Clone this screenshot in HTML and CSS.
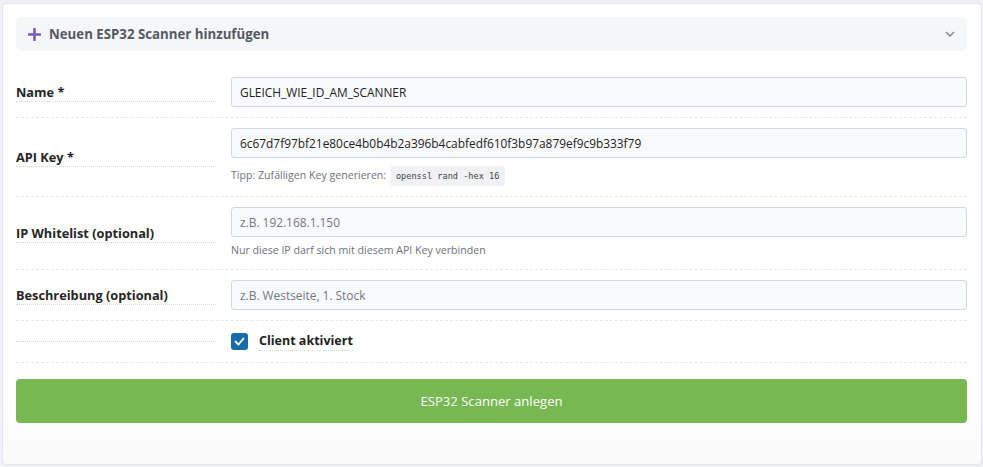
FILE: index.html
```html
<!DOCTYPE html>
<html lang="de">
<head>
<meta charset="utf-8">
<title>ESP32 Scanner</title>
<link rel="stylesheet" href="styles.css">
</head>
<body>
<div class="page">
  <div class="card">
    <div class="accordion">
      <div class="acc-title">
        <svg class="plus" width="13" height="13" viewBox="0 0 13 13"><path d="M6.5 1v11M1 6.5h11" stroke="#7b58c8" stroke-width="2.6" stroke-linecap="round"/></svg>
        <span>Neuen ESP32 Scanner hinzufügen</span>
      </div>
      <svg class="chev" width="10" height="6" viewBox="0 0 10 6"><path d="M1 1l4 4 4-4" fill="none" stroke="#7d8190" stroke-width="1.4"/></svg>
    </div>

    <form class="form">
      <div class="row">
        <label class="lbl">Name *</label>
        <div class="field">
          <input class="inp" type="text" value="GLEICH_WIE_ID_AM_SCANNER">
        </div>
      </div>
      <div class="row">
        <label class="lbl">API Key *</label>
        <div class="field">
          <input class="inp" type="text" value="6c67d7f97bf21e80ce4b0b4b2a396b4cabfedf610f3b97a879ef9c9b333f79">
          <div class="help">Tipp: Zufälligen Key generieren: <code class="code">openssl rand -hex 16</code></div>
        </div>
      </div>
      <div class="row">
        <label class="lbl">IP Whitelist (optional)</label>
        <div class="field">
          <input class="inp" type="text" placeholder="z.B. 192.168.1.150">
          <div class="help help-plain">Nur diese IP darf sich mit diesem API Key verbinden</div>
        </div>
      </div>
      <div class="row">
        <label class="lbl">Beschreibung (optional)</label>
        <div class="field">
          <input class="inp" type="text" placeholder="z.B. Westseite, 1. Stock">
        </div>
      </div>
      <div class="row">
        <label class="lbl lbl-empty"></label>
        <div class="field">
          <label class="check">
            <span class="box"><svg width="11" height="9" viewBox="0 0 11 9"><path d="M1.5 4.5l3 3 5-6" fill="none" stroke="#fff" stroke-width="1.8" stroke-linecap="round" stroke-linejoin="round"/></svg></span>
            <span class="check-text">Client aktiviert</span>
          </label>
        </div>
      </div>
      <button class="btn" type="button">ESP32 Scanner anlegen</button>
    </form>
  </div>
</div>
</body>
</html>
```

FILE: styles.css
```css
* { box-sizing: border-box; }
html, body { margin: 0; padding: 0; }
body {
  background: #f1f2f5;
  font-family: "Open Sans", "Noto Sans", Arial, sans-serif;
  color: #222;
}
.page {
  padding: 3px 1px 2px 2px;
}
.card {
  background: linear-gradient(#ffffff 85%, #fafafb);
  border: 1px solid #e4e6ec;
  border-radius: 4px;
  padding: 13px 14px 43px 13px;
  height: 462px;
}
.accordion {
  background: #f6f7f9;
  border-radius: 5px;
  height: 34px;
  display: flex;
  align-items: center;
  justify-content: space-between;
  padding: 0 12px 0 12px;
}
.acc-title {
  display: flex;
  align-items: center;
  gap: 8px;
  font-weight: 700;
  font-size: 13.25px;
  color: #555966;
}
.form {
  margin-top: 16px;
}
.row {
  display: grid;
  grid-template-columns: 200px 1fr;
  column-gap: 15px;
  align-items: center;
  padding: 10px 0;
  border-bottom: 1px dashed #e6e8ec;
}
.lbl {
  font-weight: 700;
  font-size: 12.75px;
  line-height: 18px;
  padding-top: 1px;
  border-bottom: 1px dotted #d4d6da;
  color: #262626;
}
.lbl-empty { padding: 0; height: 1px; line-height: 0; }
.field { display: flex; flex-direction: column; align-items: flex-start; }
.inp {
  width: 100%;
  height: 30px;
  border: 1px solid #d3d7e5;
  border-radius: 3px;
  background: #f9fafb;
  font-family: inherit;
  font-size: 11.9px;
  color: #222;
  padding: 0 8px;
  outline: none;
}
.inp::placeholder { color: #747780; }
.help {
  margin-top: 7px;
  font-size: 10.6px;
  color: #6f727a;
  line-height: 20px;
}
.help-plain { margin-top: 5px; line-height: 17px; }
.code {
  display: inline-block;
  font-family: "DejaVu Sans Mono", "Liberation Mono", monospace;
  font-size: 8.6px;
  background: #f1f2f5;
  color: #444;
  padding: 0 6px;
  line-height: 20px;
  border-radius: 3px;
  margin-left: 1px;
}
.check {
  display: flex;
  align-items: center;
  gap: 11px;
  padding: 1px 0 1px;
}
.box {
  width: 17px;
  height: 17px;
  border-radius: 3px;
  background: #196aab;
  display: flex;
  align-items: center;
  justify-content: center;
}
.check-text {
  font-weight: 700;
  font-size: 12.5px;
  line-height: 18px;
  border-bottom: 1px dotted #d4d6da;
}
.btn {
  display: block;
  width: 100%;
  margin-top: 16px;
  height: 44px;
  border: none;
  border-radius: 4px;
  background: #77b852;
  color: #fff;
  font-family: inherit;
  font-size: 13.1px;
}
```
